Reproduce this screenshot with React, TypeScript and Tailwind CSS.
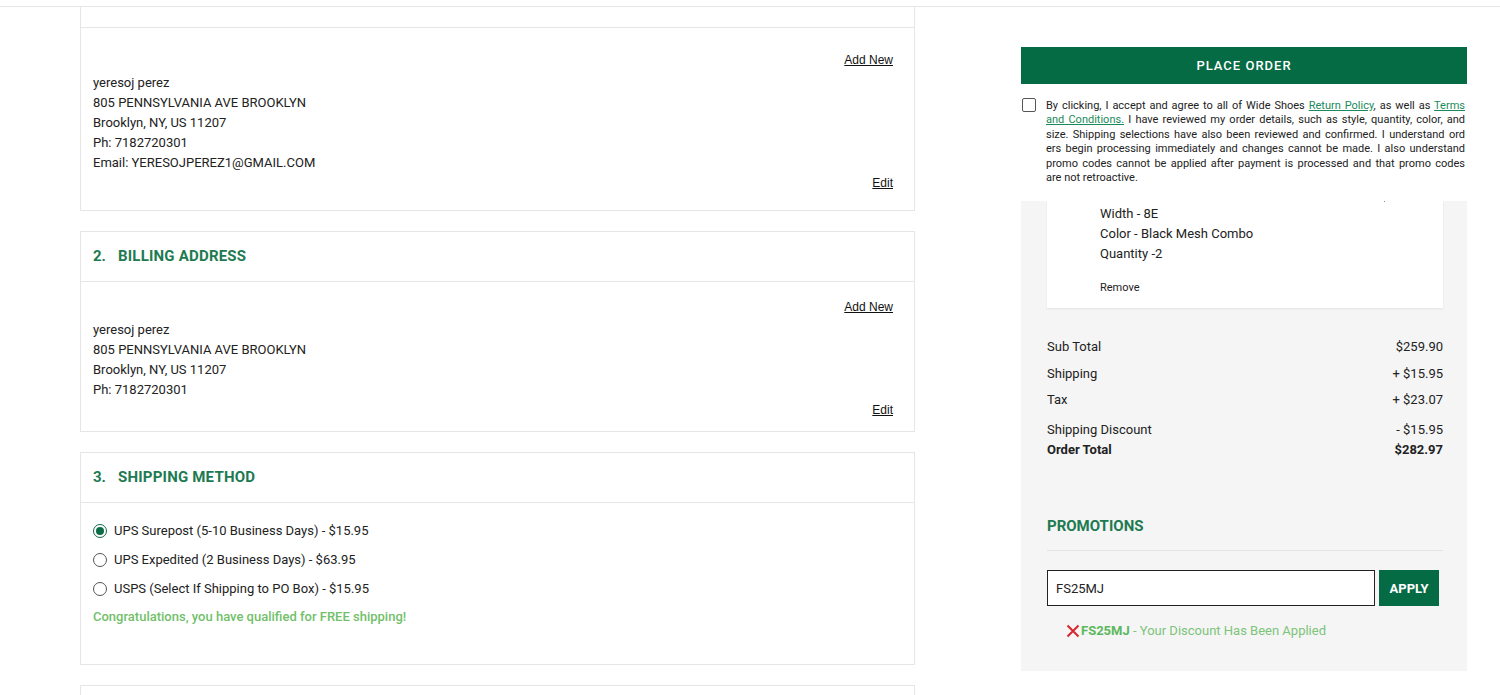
import { FC, ReactNode } from "react";

const GREEN = "text-[#1d7a51]";

const SHIPPING_OPTIONS = [
  { label: "UPS Surepost (5-10 Business Days) - $15.95", checked: true },
  { label: "UPS Expedited (2 Business Days) - $63.95", checked: false },
  { label: "USPS (Select If Shipping to PO Box) - $15.95", checked: false },
];

const TOTALS = [
  { label: "Sub Total", value: "$259.90", cls: "mt-[29px]" },
  { label: "Shipping", value: "+ $15.95", cls: "mt-[7px]" },
  { label: "Tax", value: "+ $23.07", cls: "mt-[6px]" },
  { label: "Shipping Discount", value: "- $15.95", cls: "mt-[10px]" },
];

const SectionHeader: FC<{ num: string; title: string }> = ({ num, title }) => (
  <div className={`h-[50px] flex items-center pl-[12px] border-b border-[#e6e6e6] ${GREEN}`}>
    <span className="w-[25px] text-[15px] font-bold">{num}</span>
    <span className="text-[15px] font-bold tracking-[0.2px]">{title}</span>
  </div>
);

const LinkText: FC<{ children: ReactNode }> = ({ children }) => (
  <span className="underline text-[#111] text-[12px] leading-[16px] font-['Liberation_Sans',Arial,sans-serif]">
    {children}
  </span>
);

const Address: FC<{ email?: boolean; pt: string; pb: string }> = ({ email, pt, pb }) => (
  <div className={`pl-[12px] pr-[21px] ${pt} ${pb}`}>
    <div className="flex justify-end">
      <LinkText>Add New</LinkText>
    </div>
    <div className="mt-[5px] text-[13px] leading-[20px] text-[#222]">
      <div>yeresoj perez</div>
      <div>805 PENNSYLVANIA AVE BROOKLYN</div>
      <div>Brooklyn, NY, US 11207</div>
      <div>Ph: 7182720301</div>
      {email && <div>Email: YERESOJPEREZ1@GMAIL.COM</div>}
    </div>
    <div className="flex justify-end items-center h-[20px]">
      <LinkText>Edit</LinkText>
    </div>
  </div>
);

const Radio: FC<{ checked: boolean }> = ({ checked }) =>
  checked ? (
    <span className="w-[14px] h-[14px] rounded-full border border-[#0b6b45] flex items-center justify-center">
      <span className="w-[8px] h-[8px] rounded-full bg-[#0b6b45]" />
    </span>
  ) : (
    <span className="w-[14px] h-[14px] rounded-full border border-[#555]" />
  );

const TERMS_LINES: ReactNode[] = [
  <>
    By clicking, I accept and agree to all of Wide Shoes{" "}
    <span className="underline text-[#1a8a5a]">Return Policy</span>, as well as{" "}
    <span className="underline text-[#1a8a5a]">Terms</span>
  </>,
  <>
    <span className="underline text-[#1a8a5a]">and Conditions.</span> I have reviewed my order details, such as
    style, quantity, color, and
  </>,
  <>size. Shipping selections have also been reviewed and confirmed. I understand ord</>,
  <>ers begin processing immediately and changes cannot be made. I also understand</>,
  <>promo codes cannot be applied after payment is processed and that promo codes</>,
];

export default function App() {
  return (
    <div className="w-[1500px] h-[695px] overflow-hidden bg-white font-['Roboto',Arial,sans-serif] text-[#222]">
      <div className="h-[7px] border-b border-[#e6e6e6]" />
      <div className="flex">
        {/* left column */}
        <div className="ml-[80px] w-[835px] flex flex-col gap-[20px]">
          <div className="border-x border-b border-[#e6e6e6]">
            <div className="h-[21px] border-b border-[#e6e6e6]" />
            <Address email pt="pt-[24px]" pb="pb-[17px]" />
          </div>

          <div className="border border-[#e6e6e6]">
            <SectionHeader num="2." title="BILLING ADDRESS" />
            <Address pt="pt-[17px]" pb="pb-[11px]" />
          </div>

          <div className="border border-[#e6e6e6]">
            <SectionHeader num="3." title="SHIPPING METHOD" />
            <div className="pl-[12px] pt-[13px] pb-[37px]">
              {SHIPPING_OPTIONS.map((o) => (
                <div key={o.label} className="h-[29px] flex items-center gap-[7px] text-[13px]">
                  <Radio checked={o.checked} />
                  <span>{o.label}</span>
                </div>
              ))}
              <div className="mt-[4px] leading-[20px] text-[13px] font-medium text-[#72bf6a]">
                Congratulations, you have qualified for FREE shipping!
              </div>
            </div>
          </div>

          <div className="h-[40px] border border-[#e6e6e6]" />
        </div>

        {/* right column */}
        <div className="ml-[106px] w-[446px]">
          <button
            type="button"
            className="mt-[40px] w-full h-[37px] bg-[#046b44] text-white text-[13px] font-medium tracking-[1px]"
          >
            PLACE ORDER
          </button>

          <div className="mt-[14px] flex gap-[10px] pl-[1px]">
            <span className="shrink-0 w-[14px] h-[14px] border border-[#555] rounded-[2px] bg-white" />
            <div className="w-[419px] text-[11px] leading-[14.4px] text-[#222] mt-[1px]">
              {TERMS_LINES.map((line, i) => (
                <div key={i} className="whitespace-nowrap text-justify [text-align-last:justify]">
                  {line}
                </div>
              ))}
              <div>are not retroactive.</div>
            </div>
          </div>

          <div className="mt-[16px] h-[470px] bg-[#f5f5f5] pl-[26px] pr-[24px]">
            <div className="relative bg-white shadow-[0_1px_2px_rgba(0,0,0,0.08)] h-[107px] pl-[53px] pt-[3px]">
              <span className="absolute left-[337px] top-0 w-[1px] h-[1px] bg-[#888]" />
              <div className="text-[13px] leading-[20px]">
                <div>Width - 8E</div>
                <div>Color - Black Mesh Combo</div>
                <div>Quantity -2</div>
              </div>
              <div className="mt-[17px] text-[11px] leading-[14px]">Remove</div>
            </div>

            {TOTALS.map((t) => (
              <div key={t.label} className={`flex justify-between text-[13px] leading-[20px] ${t.cls}`}>
                <span>{t.label}</span>
                <span>{t.value}</span>
              </div>
            ))}
            <div className="flex justify-between text-[13px] leading-[20px] font-bold">
              <span>Order Total</span>
              <span>$282.97</span>
            </div>

            <div className={`mt-[56px] text-[15px] font-bold leading-[20px] ${GREEN}`}>PROMOTIONS</div>
            <div className="mt-[14px] border-t border-[#e3e3e3]" />

            <div className="mt-[19px] flex gap-[4px]">
              <div className="w-[328px] h-[36px] border-[1.5px] border-[#222] bg-white flex items-center pl-[8px] text-[13px]">
                FS25MJ
              </div>
              <button
                type="button"
                className="w-[60px] h-[36px] bg-[#046b44] text-white text-[13px] font-bold"
              >
                APPLY
              </button>
            </div>

            <div className="mt-[15px] pl-[19px] flex items-center text-[13px] leading-[20px]">
              <svg width="14" height="14" viewBox="0 0 14 14" className="mr-[1px]">
                <path d="M1.5 1.5 L12.5 12.5 M12.5 1.5 L1.5 12.5" stroke="#d9262c" strokeWidth="2" />
              </svg>
              <span className="font-bold text-[#5cb85c]">FS25MJ</span>
              <span className="text-[#7cc47a]">&nbsp;- Your Discount Has Been Applied</span>
            </div>
          </div>
        </div>
      </div>
    </div>
  );
}
